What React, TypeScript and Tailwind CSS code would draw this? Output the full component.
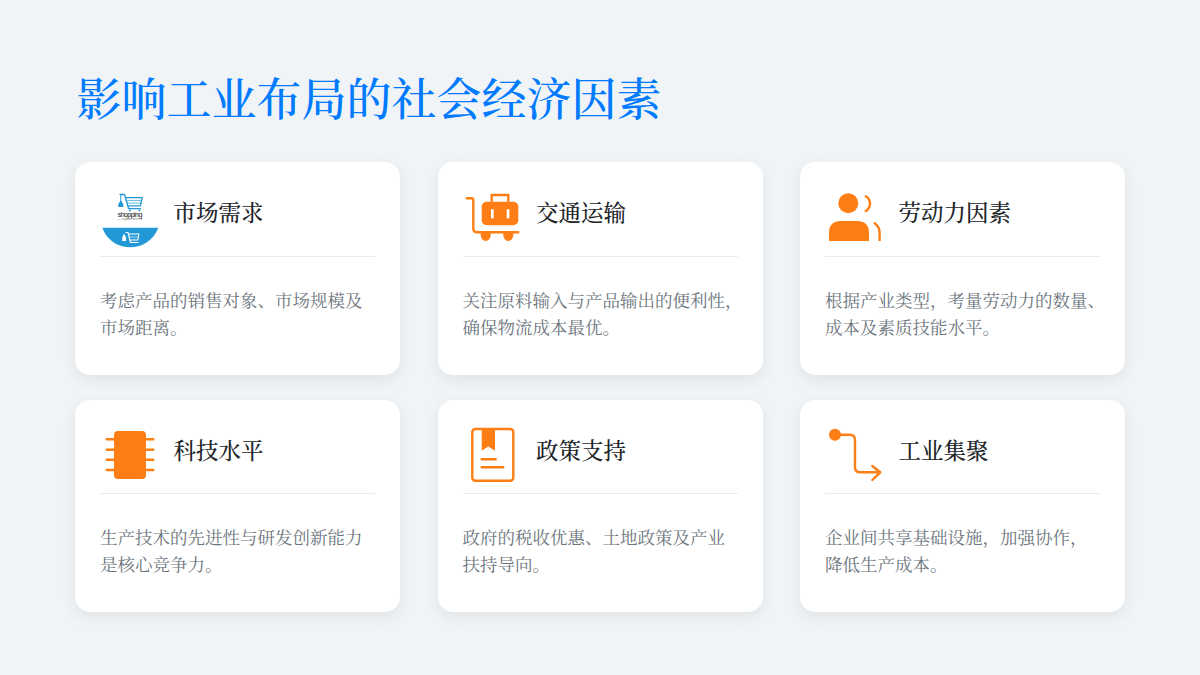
import React from "react";

const ORANGE = "#fd7e14";
const BLUE = "#2299d6";

function ShoppingIcon() {
  return (
    <svg viewBox="0 0 60 60" className="h-[60px] w-[60px] overflow-visible">
      <g fill="none" stroke={BLUE} strokeLinejoin="round" strokeLinecap="round">
        <path d="M20 7.5 H24.5 L28.7 21.7 H40.5" strokeWidth="1.3" />
        <path d="M26 10.7 H42.3 L40.3 18.8 H28.2" strokeWidth="1.3" />
        <path d="M27 13.4 H41.5 M27.8 16.1 H41" strokeWidth="0.7" />
        <path d="M20.8 12.5 V8" strokeWidth="1" />
      </g>
      <path d="M18.3 17.5 L20.8 12.5 L23.3 17.5 V20 H18.3 Z" fill={BLUE} />
      <circle cx="30" cy="23.5" r="1" fill={BLUE} />
      <circle cx="39.5" cy="23.5" r="1" fill={BLUE} />
      <text x="30" y="29.6" textAnchor="middle" fontSize="7" fill="#333333" stroke="#333333" strokeWidth="0.1" fontFamily="'Liberation Sans', sans-serif" textLength="24.6">
        shopping
      </text>
      <text x="30" y="33.2" textAnchor="middle" fontSize="2.6" fill="#666666" fontFamily="'Liberation Sans', sans-serif" textLength="24">
        — supplier here —
      </text>
      <path d="M2.3 40.7 H58.3 C54 53 42 60.3 30.3 60.3 C18 60.3 6.5 53 2.3 40.7 Z" fill={BLUE} />
      <g fill="none" stroke="#ffffff" strokeLinejoin="round" strokeLinecap="round">
        <path d="M26 45.5 H28 L30.5 55.5 H38" strokeWidth="1.1" />
        <path d="M28.5 47 H39 L37.7 53 H30" strokeWidth="1.1" />
        <path d="M29.3 50 H38.3" strokeWidth="0.6" />
      </g>
      <path d="M22.3 50.5 L24 46.5 L26 50.5 V54 H22.3 Z" fill="#ffffff" />
    </svg>
  );
}

function LuggageIcon() {
  return (
    <svg viewBox="0 0 60 60" className="h-[60px] w-[60px] overflow-visible">
      <path d="M3.7 11.3 H8.5 Q10.3 11.3 10.3 13 V41.3 Q10.3 45.3 14.3 45.3 H55.3" fill="none" stroke={ORANGE} strokeWidth="2.4" strokeLinecap="round" />
      <path d="M28.7 14.7 V8 H45.3 V14.7" fill="none" stroke={ORANGE} strokeWidth="2.4" />
      <rect x="18.7" y="14.7" width="36.6" height="23.6" rx="5" fill={ORANGE} />
      <rect x="28" y="22.3" width="2.7" height="9" fill="#ffffff" />
      <rect x="43.7" y="22.3" width="2.7" height="9" fill="#ffffff" />
      <path d="M17.7 45.3 H27.7 V48 A5 6 0 0 1 17.7 48 Z" fill={ORANGE} />
      <path d="M40.3 45.3 H50.3 V48 A5 6 0 0 1 40.3 48 Z" fill={ORANGE} />
    </svg>
  );
}

function PersonIcon() {
  return (
    <svg viewBox="0 0 60 60" className="h-[60px] w-[60px] overflow-visible">
      <circle cx="23.3" cy="16.3" r="10" fill={ORANGE} />
      <path d="M4 54 V46 Q4 34 16 34 H32 Q44 34 44 46 V54 Z" fill={ORANGE} />
      <path d="M40 8.7 Q45 11.5 45 16.5 Q45 21.5 40 24.7" fill="none" stroke={ORANGE} strokeWidth="2.4" />
      <path d="M49 35.7 Q54.6 39.5 54.6 46 V54" fill="none" stroke={ORANGE} strokeWidth="2.4" />
    </svg>
  );
}

function ChipIcon() {
  return (
    <svg viewBox="0 0 60 60" className="h-[60px] w-[60px] overflow-visible">
      <path d="M6.7 14.3 H53.3 M6.7 24.7 H53.3 M6.7 34.7 H53.3 M6.7 45 H53.3" stroke={ORANGE} strokeWidth="2.4" strokeLinecap="round" />
      <rect x="14" y="6" width="32" height="48" rx="4" fill={ORANGE} />
    </svg>
  );
}

function BookIcon() {
  return (
    <svg viewBox="0 0 60 60" className="h-[60px] w-[60px] overflow-visible">
      <rect x="9.3" y="4" width="41" height="51.7" rx="3" fill="none" stroke={ORANGE} strokeWidth="2.4" />
      <path d="M18.7 4 H32 V25.7 L25.3 21.5 L18.7 25.7 Z" fill={ORANGE} />
      <path d="M18.7 34.3 H32.7 M18.7 42.3 H40.3" stroke={ORANGE} strokeWidth="2.4" strokeLinecap="round" />
    </svg>
  );
}

function RouteIcon() {
  return (
    <svg viewBox="0 0 60 60" className="h-[60px] w-[60px] overflow-visible">
      <circle cx="10" cy="9.7" r="6" fill={ORANGE} />
      <path d="M10 9.7 H25 Q30 9.7 30 15 V41.7 Q30 47.3 35 47.3 H55" fill="none" stroke={ORANGE} strokeWidth="2.4" />
      <path d="M47.3 41 L55.3 47.3 L47.3 55" fill="none" stroke={ORANGE} strokeWidth="2.4" strokeLinecap="round" strokeLinejoin="round" />
    </svg>
  );
}

const cards = [
  { title: "市场需求", lines: ["考虑产品的销售对象、市场规模及", "市场距离。"], icon: <ShoppingIcon /> },
  { title: "交通运输", lines: ["关注原料输入与产品输出的便利性，", "确保物流成本最优。"], icon: <LuggageIcon /> },
  { title: "劳动力因素", lines: ["根据产业类型，考量劳动力的数量、", "成本及素质技能水平。"], icon: <PersonIcon /> },
  { title: "科技水平", lines: ["生产技术的先进性与研发创新能力", "是核心竞争力。"], icon: <ChipIcon /> },
  { title: "政策支持", lines: ["政府的税收优惠、土地政策及产业", "扶持导向。"], icon: <BookIcon /> },
  { title: "工业集聚", lines: ["企业间共享基础设施，加强协作，", "降低生产成本。"], icon: <RouteIcon /> },
];

export default function App() {
  return (
    <div
      className="h-[675px] w-[1200px] overflow-hidden bg-[#f0f4f7] px-[75px] pt-[70px]"
      style={{ fontFamily: '"Noto Serif CJK SC", "Source Han Serif SC", "Liberation Serif", "Noto Sans CJK SC", serif' }}
    >
      <h1 className="mb-[38px] pl-[1.5px] text-[45px] leading-[54px] font-medium text-[#007bff]">影响工业布局的社会经济因素</h1>
      <div className="grid grid-cols-3 gap-x-[37.5px] gap-y-[25px]">
        {cards.map((c) => (
          <div key={c.title} className="h-[212.5px] rounded-[15px] bg-white p-[25px] shadow-[0_5px_15px_rgba(0,0,0,0.07)]">
            <div className="flex items-center gap-[13.5px] border-b border-[#e9ecef] pb-[8.5px]">
              {c.icon}
              <h2 className="pb-[12px] text-[22.5px] leading-[26px] font-medium text-[#212529]">{c.title}</h2>
            </div>
            <p className="mt-[29px] text-[17.5px] leading-[27px] whitespace-nowrap text-[#6c757d]">
              {c.lines[0]}
              <br />
              {c.lines[1]}
            </p>
          </div>
        ))}
      </div>
    </div>
  );
}
